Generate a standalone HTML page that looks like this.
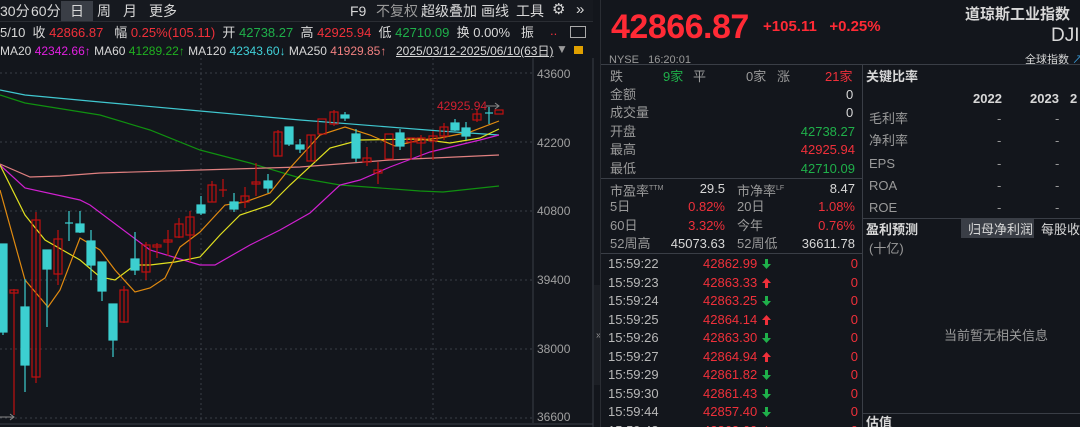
<!DOCTYPE html>
<html><head><meta charset="utf-8"><style>
*{margin:0;padding:0;box-sizing:border-box}
html,body{width:1080px;height:427px;overflow:hidden}
body{background:#13161c;font-family:"Liberation Sans","Noto Sans CJK SC",sans-serif;color:#c8c8c8;font-size:13px;position:relative;line-height:16px}
.a{position:absolute;white-space:nowrap}
.r{color:#f0303a}.g{color:#1fb04a}.w{color:#d8d8d8}.gr{color:#9a9a9a}
.t{position:absolute;left:608px;width:250px;height:18px;font-size:13px;line-height:18px}
.t b{font-weight:normal;position:absolute}
.t .tm{left:0;color:#b8b8b8}.t .p{left:95px;color:#f0303a}.t .v{right:0;color:#f0303a}
.t svg{position:absolute;left:154px;top:4px}
</style></head><body>
<div class="a" style="left:0;top:0;width:593px;height:22px;background:#16191f;border-bottom:1px solid #2a2d33"></div>
<div class="a w" style="left:0;top:3px;font-size:14px">30分</div>
<div class="a w" style="left:31px;top:3px;font-size:14px">60分</div>
<div class="a" style="left:61px;top:1px;width:32px;height:20px;background:#3a3e46"></div>
<div class="a w" style="left:70px;top:3px;font-size:14px">日</div>
<div class="a w" style="left:97px;top:3px;font-size:14px">周</div>
<div class="a w" style="left:123px;top:3px;font-size:14px">月</div>
<div class="a w" style="left:149px;top:3px;font-size:14px">更多</div>
<div class="a w" style="left:350px;top:3px;font-size:14px">F9</div>
<div class="a gr" style="left:376px;top:3px;font-size:14px">不复权</div>
<div class="a w" style="left:421px;top:3px;font-size:14px">超级叠加</div>
<div class="a w" style="left:481px;top:3px;font-size:14px">画线</div>
<div class="a w" style="left:516px;top:3px;font-size:14px">工具</div>
<div class="a w" style="left:552px;top:2px;font-size:15px">⚙</div>
<div class="a w" style="left:576px;top:2px;font-size:15px">»</div>
<div class="a" style="left:0;top:25px;font-size:13px"><span class="w">5/10 &nbsp;收 </span><span class="r">42866.87</span><span class="w"> &nbsp; 幅 </span><span class="r">0.25%(105.11)</span><span class="w"> &nbsp;开 </span><span class="g">42738.27</span><span class="w"> &nbsp;高 </span><span class="r">42925.94</span><span class="w"> &nbsp;低 </span><span class="g">42710.09</span><span class="w"> &nbsp;换 0.00% &nbsp; 振</span></div>
<div class="a r" style="left:550px;top:23px">..</div>
<div class="a" style="left:570px;top:26px;width:16px;height:12px;border:1px solid #aaa"></div>
<div class="a" style="left:0;top:43px;font-size:12px"><span class="w">MA20 </span><span style="color:#e020e0">42342.66↑</span><span class="w"> MA60 </span><span style="color:#20b020">41289.22↑</span><span class="w"> MA120 </span><span style="color:#40d0d8">42343.60↓</span><span class="w"> MA250 </span><span style="color:#f08080">41929.85↑</span></div>
<div class="a w" style="left:396px;top:43px;font-size:12px;text-decoration:underline">2025/03/12-2025/06/10(63日)</div>
<div class="a gr" style="left:556px;top:41px;font-size:12px">▼</div>
<div class="a" style="left:574px;top:46px;width:9px;height:8px;background:#e0a000"></div>
<svg class="a" style="left:0;top:58px" width="600" height="369" viewBox="0 58 600 369">
<g stroke="#3a3e46" stroke-dasharray="2,3" stroke-width="1">
<line x1="0" y1="73" x2="533" y2="73"/><line x1="0" y1="142" x2="533" y2="142"/><line x1="0" y1="211" x2="533" y2="211"/><line x1="0" y1="280" x2="533" y2="280"/><line x1="0" y1="349" x2="533" y2="349"/><line x1="0" y1="418" x2="533" y2="418"/>
<line x1="201" y1="58" x2="201" y2="423"/><line x1="433" y1="58" x2="433" y2="423"/>
</g>
<line x1="533" y1="58" x2="533" y2="423" stroke="#3a3e46"/>
<line x1="593" y1="0" x2="593" y2="427" stroke="#3a3e46"/>
<line x1="0" y1="424" x2="593" y2="424" stroke="#3a3e46"/>
<g font-size="12" fill="#a0a0a0" font-family="Liberation Sans">
<text x="537" y="78">43600</text><text x="537" y="147">42200</text><text x="537" y="215">40800</text><text x="537" y="284">39400</text><text x="537" y="353">38000</text><text x="537" y="421">36600</text>
</g>
<g fill="none" stroke-width="1.2">
<polyline stroke="#40c8d0" points="0,90 25,95 100,102 200,111 300,120 440,131 499,135"/>
<polyline stroke="#109010" points="0,95 25,103 100,115 150,130 200,150 250,163 300,178 340,185 420,191 443,192 499,186"/>
<polyline stroke="#e08080" points="0,164 30,177 60,176 100,173 200,170 300,167 390,160 499,155"/>
<polyline stroke="#d020d0" points="0,165 25,188 80,200 90,205 150,250 200,265 215,265 250,245 280,230 310,213 340,185 360,180 390,167 430,152 480,140 499,135"/>
<polyline stroke="#e0e020" points="0,165 25,215 45,240 80,260 100,277 115,280 135,265 150,265 175,262 200,257 220,235 240,215 270,205 290,185 330,148 360,140 420,139 450,143 480,138 499,129"/>
<polyline stroke="#e08a10" points="0,190 25,280 48,307 60,290 80,238 100,250 115,270 135,292 150,288 165,278 180,247 200,232 225,205 245,202 270,193 290,168 320,135 345,127 370,135 395,146 420,140 440,138 470,132 499,121"/>
</g>
<g stroke-width="1.2">
<g fill="#3ccfd0" stroke="#3ccfd0">
<line x1="3" y1="244" x2="3" y2="335"/><rect x="-1" y="244" width="8" height="88"/>
<line x1="25" y1="279" x2="25" y2="392"/><rect x="21" y="307" width="8" height="58"/>
<line x1="47" y1="250" x2="47" y2="327"/><rect x="43" y="250" width="8" height="19"/>
<line x1="69" y1="211" x2="69" y2="241"/><line x1="65" y1="223" x2="73" y2="223"/>
<line x1="80" y1="211" x2="80" y2="233"/><rect x="76" y="224" width="8" height="8"/>
<line x1="91" y1="230" x2="91" y2="280"/><rect x="87" y="241" width="8" height="24"/>
<line x1="102" y1="262" x2="102" y2="301"/><rect x="98" y="262" width="8" height="29"/>
<line x1="113" y1="304" x2="113" y2="357"/><rect x="109" y="304" width="8" height="36"/>
<line x1="135" y1="232" x2="135" y2="275"/><rect x="131" y="259" width="8" height="11"/>
<line x1="201" y1="196" x2="201" y2="215"/><rect x="197" y="205" width="8" height="8"/>
<line x1="234" y1="193" x2="234" y2="212"/><rect x="230" y="202" width="8" height="7"/>
<line x1="268" y1="174" x2="268" y2="193"/><rect x="264" y="181" width="8" height="7"/>
<line x1="289" y1="127" x2="289" y2="146"/><rect x="285" y="127" width="8" height="17"/>
<line x1="300" y1="139" x2="300" y2="153"/><rect x="296" y="145" width="8" height="4"/>
<line x1="345" y1="112" x2="345" y2="121"/><rect x="341" y="115" width="8" height="3"/>
<line x1="356" y1="129" x2="356" y2="162"/><rect x="352" y="134" width="8" height="24"/>
<line x1="400" y1="129" x2="400" y2="150"/><rect x="396" y="133" width="8" height="13"/>
<line x1="455" y1="119" x2="455" y2="131"/><rect x="451" y="123" width="8" height="7"/>
<line x1="466" y1="122" x2="466" y2="140"/><rect x="462" y="128" width="8" height="8"/>
<line x1="489" y1="107" x2="489" y2="124"/><line x1="485" y1="113" x2="493" y2="113"/>
</g>
<g fill="none" stroke="#c01010">
<line x1="14" y1="289" x2="14" y2="415"/><rect x="10" y="290" width="8" height="3"/>
<line x1="36" y1="212" x2="36" y2="383"/><rect x="32" y="220" width="8" height="157"/>
<line x1="58" y1="230" x2="58" y2="285"/><rect x="54" y="239" width="8" height="35"/>
<line x1="124" y1="286" x2="124" y2="323"/><rect x="120" y="290" width="8" height="32"/>
<line x1="146" y1="242" x2="146" y2="280"/><rect x="142" y="245" width="8" height="27"/>
<line x1="157" y1="243" x2="157" y2="258"/><rect x="153" y="245" width="8" height="2"/>
<line x1="168" y1="230" x2="168" y2="256"/><rect x="164" y="240" width="8" height="2"/>
<line x1="179" y1="218" x2="179" y2="238"/><rect x="175" y="224" width="8" height="13"/>
<line x1="190" y1="211" x2="190" y2="262"/><rect x="186" y="217" width="8" height="18"/>
<line x1="212" y1="181" x2="212" y2="202"/><rect x="208" y="185" width="8" height="17"/>
<line x1="223" y1="179" x2="223" y2="197"/><line x1="219" y1="190" x2="227" y2="190"/>
<line x1="245" y1="187" x2="245" y2="208"/><rect x="241" y="196" width="8" height="6"/>
<line x1="256" y1="163" x2="256" y2="196"/><rect x="252" y="182" width="8" height="2"/>
<line x1="278" y1="130" x2="278" y2="156"/><rect x="274" y="132" width="8" height="24"/>
<line x1="311" y1="135" x2="311" y2="161"/><rect x="307" y="135" width="8" height="26"/>
<rect x="318" y="119" width="8" height="15"/>
<line x1="334" y1="110" x2="334" y2="126"/><rect x="330" y="112" width="8" height="12"/>
<line x1="367" y1="147" x2="367" y2="166"/><rect x="363" y="158" width="8" height="4"/>
<line x1="378" y1="162" x2="378" y2="184"/><rect x="374" y="170" width="8" height="3"/>
<rect x="385" y="134" width="8" height="25"/>
<line x1="411" y1="138" x2="411" y2="160"/><rect x="407" y="138" width="8" height="4"/>
<line x1="421" y1="135" x2="421" y2="158"/><rect x="417" y="138" width="8" height="5"/>
<line x1="433" y1="131" x2="433" y2="160"/><rect x="429" y="136" width="8" height="5"/>
<line x1="444" y1="123" x2="444" y2="140"/><rect x="440" y="127" width="8" height="9"/>
<line x1="477" y1="110" x2="477" y2="122"/><rect x="473" y="114" width="8" height="6"/>
<rect x="495" y="110" width="8" height="4"/>
</g>
</g>
<text x="437" y="110" font-size="12" fill="#d02030" font-family="Liberation Sans">42925.94</text>
<line x1="486" y1="106" x2="499" y2="106" stroke="#888"/><path d="M495,103 L499,106 L495,109" stroke="#888" fill="none"/>
<line x1="0" y1="417" x2="14" y2="417" stroke="#888"/><path d="M10,414 L14,417 L10,420" stroke="#888" fill="none"/>
</svg>
<div class="a" style="left:594px;top:285px;width:10px;height:100px;background:#1c1f25;border-radius:0 4px 4px 0"></div>
<div class="a gr" style="left:596px;top:328px;font-size:10px">»</div>
<div class="a" style="left:600px;top:0;width:480px;height:427px;background:#13161c;border-left:1px solid #2a2d33"></div>
<div class="a" style="left:611px;top:8px;font-size:34px;line-height:38px;font-weight:bold;color:#ff2a35;letter-spacing:-0.5px">42866.87</div>
<div class="a" style="left:763px;top:19px;font-size:15px;font-weight:bold;color:#ff2a35">+105.11 &nbsp; +0.25%</div>
<div class="a w" style="left:965px;top:7px;font-size:15px;font-weight:bold">道琼斯工业指数</div>
<div class="a w" style="left:1051px;top:26px;font-size:19px;line-height:20px">DJI</div>
<div class="a gr" style="left:609px;top:52px;font-size:11px">NYSE &nbsp; 16:20:01</div>
<div class="a w" style="left:1025px;top:52px;font-size:11px">全球指数 <span style="color:#3aa0e0">↗</span></div>
<div class="a" style="left:601px;top:64px;width:479px;height:1px;background:#3a3e46"></div>
<div class="a" style="left:862px;top:64px;width:1px;height:363px;background:#3a3e46"></div>
<div class="a" style="left:601px;top:178px;width:261px;height:1px;background:#3a3e46"></div>
<div class="a" style="left:601px;top:253px;width:261px;height:1px;background:#3a3e46"></div>
<div class="a gr" style="left:610px;top:69px">跌</div><div class="a g" style="left:663px;top:69px">9家</div><div class="a gr" style="left:693px;top:69px">平</div><div class="a gr" style="left:746px;top:69px">0家</div><div class="a gr" style="left:777px;top:69px">涨</div><div class="a r" style="left:825px;top:69px">21家</div>
<div class="a gr" style="left:610px;top:87px">金额</div><div class="a w" style="left:846px;top:87px">0</div>
<div class="a gr" style="left:610px;top:105px">成交量</div><div class="a w" style="left:846px;top:105px">0</div>
<div class="a gr" style="left:610px;top:124px">开盘</div><div class="a g" style="right:225px;top:124px">42738.27</div>
<div class="a gr" style="left:610px;top:142px">最高</div><div class="a r" style="right:225px;top:142px">42925.94</div>
<div class="a gr" style="left:610px;top:161px">最低</div><div class="a g" style="right:225px;top:161px">42710.09</div>
<div class="a gr" style="left:610px;top:181px">市盈率<sup style="font-size:7px">TTM</sup></div><div class="a w" style="right:355px;top:181px">29.5</div><div class="a gr" style="left:737px;top:181px">市净率<sup style="font-size:7px">LF</sup></div><div class="a w" style="right:225px;top:181px">8.47</div>
<div class="a gr" style="left:610px;top:199px">5日</div><div class="a r" style="right:355px;top:199px">0.82%</div><div class="a gr" style="left:737px;top:199px">20日</div><div class="a r" style="right:225px;top:199px">1.08%</div>
<div class="a gr" style="left:610px;top:218px">60日</div><div class="a r" style="right:355px;top:218px">3.32%</div><div class="a gr" style="left:737px;top:218px">今年</div><div class="a r" style="right:225px;top:218px">0.76%</div>
<div class="a gr" style="left:610px;top:236px">52周高</div><div class="a w" style="right:355px;top:236px">45073.63</div><div class="a gr" style="left:737px;top:236px">52周低</div><div class="a w" style="right:225px;top:236px">36611.78</div>
<div class="t" style="top:255px"><b class="tm">15:59:22</b><b class="p">42862.99</b><svg width="9" height="10"><path d="M3,0h3v5h3l-4.5,5l-4.5,-5h3z" fill="#1fb04a"/></svg><b class="v">0</b></div>
<div class="t" style="top:273.5px"><b class="tm">15:59:23</b><b class="p">42863.33</b><svg width="9" height="10"><path d="M3,10h3v-5h3l-4.5,-5l-4.5,5h3z" fill="#f0303a"/></svg><b class="v">0</b></div>
<div class="t" style="top:292px"><b class="tm">15:59:24</b><b class="p">42863.25</b><svg width="9" height="10"><path d="M3,0h3v5h3l-4.5,5l-4.5,-5h3z" fill="#1fb04a"/></svg><b class="v">0</b></div>
<div class="t" style="top:310.5px"><b class="tm">15:59:25</b><b class="p">42864.14</b><svg width="9" height="10"><path d="M3,10h3v-5h3l-4.5,-5l-4.5,5h3z" fill="#f0303a"/></svg><b class="v">0</b></div>
<div class="t" style="top:329px"><b class="tm">15:59:26</b><b class="p">42863.30</b><svg width="9" height="10"><path d="M3,0h3v5h3l-4.5,5l-4.5,-5h3z" fill="#1fb04a"/></svg><b class="v">0</b></div>
<div class="t" style="top:347.5px"><b class="tm">15:59:27</b><b class="p">42864.94</b><svg width="9" height="10"><path d="M3,10h3v-5h3l-4.5,-5l-4.5,5h3z" fill="#f0303a"/></svg><b class="v">0</b></div>
<div class="t" style="top:366px"><b class="tm">15:59:29</b><b class="p">42861.82</b><svg width="9" height="10"><path d="M3,0h3v5h3l-4.5,5l-4.5,-5h3z" fill="#1fb04a"/></svg><b class="v">0</b></div>
<div class="t" style="top:384.5px"><b class="tm">15:59:30</b><b class="p">42861.43</b><svg width="9" height="10"><path d="M3,0h3v5h3l-4.5,5l-4.5,-5h3z" fill="#1fb04a"/></svg><b class="v">0</b></div>
<div class="t" style="top:403px"><b class="tm">15:59:44</b><b class="p">42857.40</b><svg width="9" height="10"><path d="M3,0h3v5h3l-4.5,5l-4.5,-5h3z" fill="#1fb04a"/></svg><b class="v">0</b></div>
<div class="t" style="top:421.5px"><b class="tm">15:59:48</b><b class="p">42863.60</b><svg width="9" height="10"><path d="M3,10h3v-5h3l-4.5,-5l-4.5,5h3z" fill="#f0303a"/></svg><b class="v">0</b></div>
<div class="a w" style="left:866px;top:69px;font-weight:bold">关键比率</div>
<div class="a w" style="left:973px;top:91px;font-weight:bold">2022</div><div class="a w" style="left:1030px;top:91px;font-weight:bold">2023</div><div class="a w" style="left:1070px;top:91px;font-weight:bold">2</div>
<div class="a gr" style="left:869px;top:111px">毛利率</div><div class="a gr" style="left:997px;top:111px">-</div><div class="a gr" style="left:1055px;top:111px">-</div>
<div class="a gr" style="left:869px;top:133px">净利率</div><div class="a gr" style="left:997px;top:133px">-</div><div class="a gr" style="left:1055px;top:133px">-</div>
<div class="a gr" style="left:869px;top:156px">EPS</div><div class="a gr" style="left:997px;top:156px">-</div><div class="a gr" style="left:1055px;top:156px">-</div>
<div class="a gr" style="left:869px;top:178px">ROA</div><div class="a gr" style="left:997px;top:178px">-</div><div class="a gr" style="left:1055px;top:178px">-</div>
<div class="a gr" style="left:869px;top:200px">ROE</div><div class="a gr" style="left:997px;top:200px">-</div><div class="a gr" style="left:1055px;top:200px">-</div>
<div class="a" style="left:863px;top:218px;width:217px;height:1px;background:#3a3e46"></div>
<div class="a w" style="left:866px;top:222px;font-weight:bold">盈利预测</div>
<div class="a" style="left:961px;top:219px;width:73px;height:19px;background:#3a3e46"></div>
<div class="a w" style="left:968px;top:222px">归母净利润</div>
<div class="a w" style="left:1041px;top:222px">每股收益</div>
<div class="a gr" style="left:869px;top:241px">(十亿)</div>
<div class="a gr" style="left:944px;top:328px">当前暂无相关信息</div>
<div class="a" style="left:863px;top:413px;width:217px;height:1px;background:#3a3e46"></div>
<div class="a w" style="left:866px;top:415px;font-weight:bold">估值</div>
</body></html>
